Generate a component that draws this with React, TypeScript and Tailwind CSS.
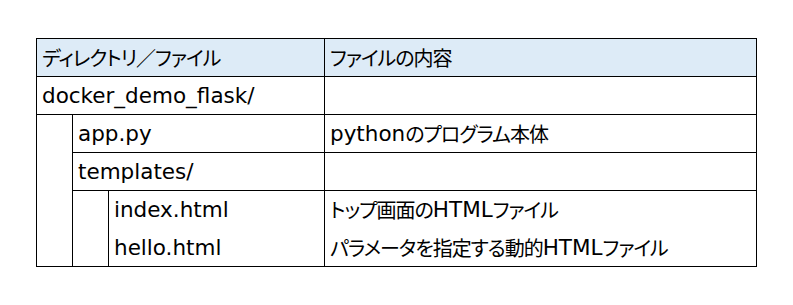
import type { ReactNode } from "react";

function J({ children }: { children: ReactNode }) {
  return (
    <span className="font-['Noto_Sans_CJK_JP',sans-serif] text-[20px] tracking-[-1px] [font-feature-settings:'palt']">
      {children}
    </span>
  );
}

function Cell({
  children,
  className = "",
}: {
  children?: ReactNode;
  className?: string;
}) {
  return (
    <div
      className={`flex items-center border-r border-b border-black pl-[5px] leading-[24px] whitespace-nowrap ${className}`}
    >
      {children}
    </div>
  );
}

export default function App() {
  return (
    <div className="min-h-[305px] w-[793px] bg-white pl-[36px] pt-[38px] font-['DejaVu_Sans','Noto_Sans_CJK_JP',sans-serif] text-[21.5px] text-black">
      <div className="grid w-[721px] grid-cols-[36px_36px_216px_432px] auto-rows-[38px] border-t border-l border-black">
        {/* header */}
        <Cell className="col-span-3 bg-[#ddebf7]">
          <J>ディレクトリ／ファイル</J>
        </Cell>
        <Cell className="bg-[#ddebf7]">
          <J>ファイルの内容</J>
        </Cell>

        {/* root dir */}
        <Cell className="col-span-3">docker_demo_flask/</Cell>
        <Cell />

        {/* level 1 */}
        <div className="row-span-4 border-r border-b border-black" />
        <Cell className="col-span-2">app.py</Cell>
        <Cell>
          python<J>のプログラム本体</J>
        </Cell>
        <Cell className="col-span-2">templates/</Cell>
        <Cell />

        {/* level 2 */}
        <div className="row-span-2 border-r border-b border-black" />
        <Cell className="border-b-0">index.html</Cell>
        <Cell className="border-b-0">
          <J>トップ画面の</J>HTML<J>ファイル</J>
        </Cell>
        <Cell>hello.html</Cell>
        <Cell>
          <J>パラメータを指定する動的</J>HTML<J>ファイル</J>
        </Cell>
      </div>
    </div>
  );
}
